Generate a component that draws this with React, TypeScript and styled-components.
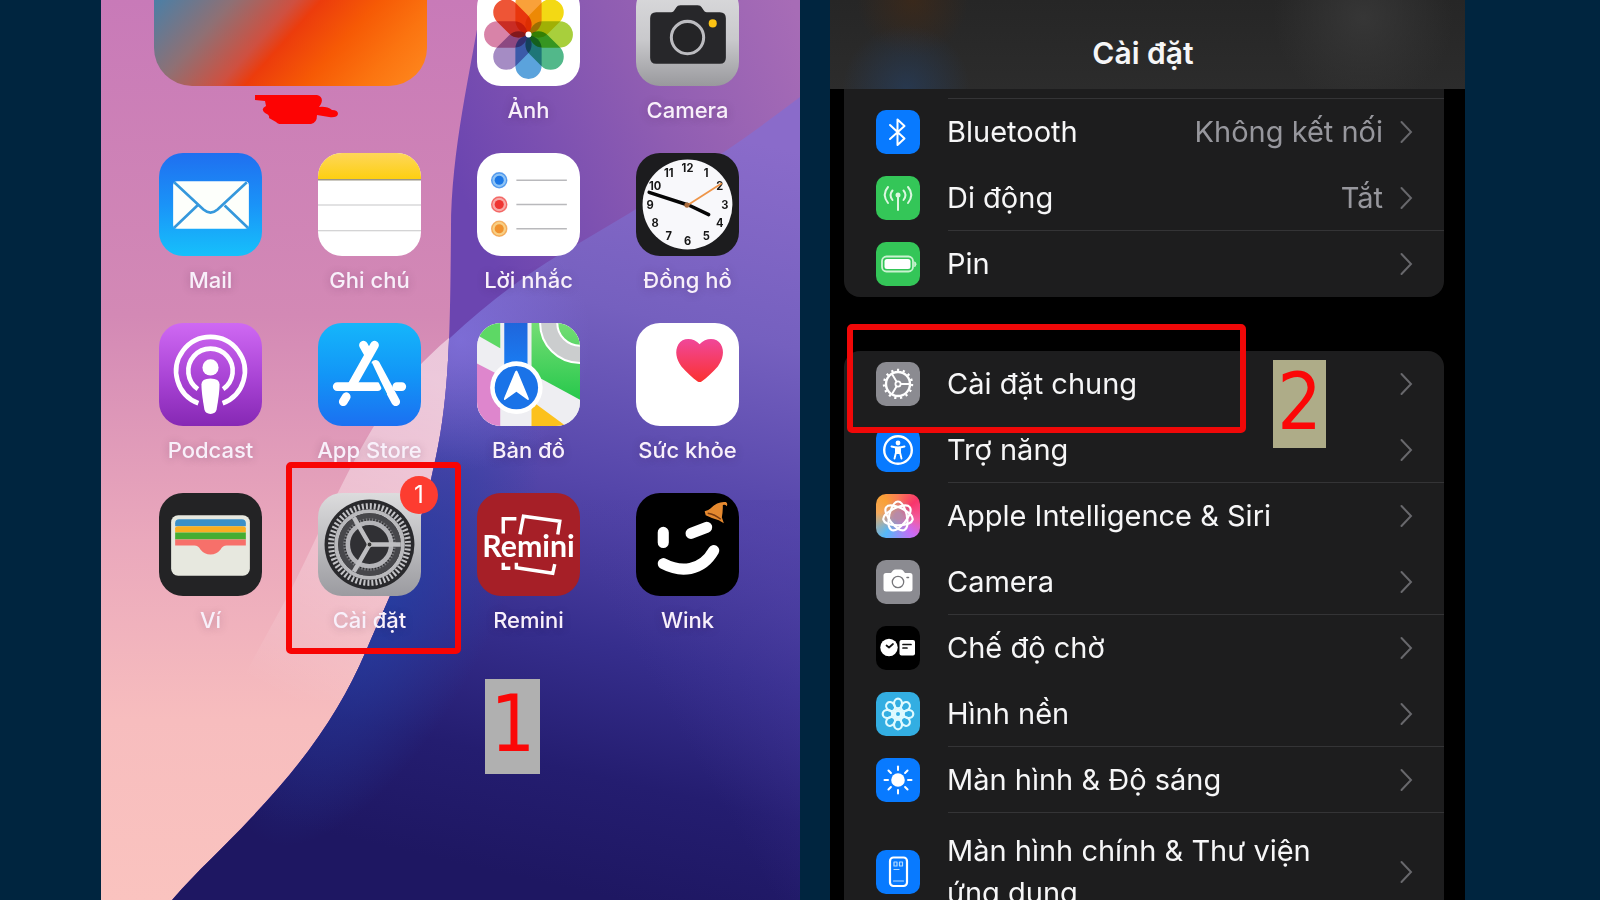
import React from "react";
import styled, { createGlobalStyle } from "styled-components";

const GlobalStyle = createGlobalStyle`
  *, *::before, *::after { box-sizing: border-box; }
  body { margin: 0; background: #00253f; font-family: Inter, "Noto Sans", sans-serif; }
  button { font: inherit; color: inherit; background: none; border: 0; padding: 0; text-align: inherit; cursor: pointer; }
  h1, ul, p { margin: 0; padding: 0; }
  ul { list-style: none; }
`;

const Page = styled.main`
  display: grid;
  grid-template-columns: 699fr 635fr;
  column-gap: 30px;
  padding: 0 135px 0 101px;
  height: 100vh;
  overflow: hidden;
`;

/* ---------- Home screen ---------- */

const HomeScreen = styled.section`
  position: relative;
  isolation: isolate;
  overflow: hidden;
  min-height: 100vh;
`;

const WallpaperArt = styled.svg`
  position: absolute;
  inset: 0;
  z-index: -1;
  width: 100%;
  height: 100%;
`;

const AppGrid = styled.ul`
  display: grid;
  grid-template-columns: repeat(4, 1fr);
  row-gap: 29px;
  margin-top: -17px;
  padding: 0 33px 0 30px;
`;

const Cell = styled.li<{ $span?: number }>`
  position: relative;
  grid-column: span ${(p) => p.$span ?? 1};
  display: flex;
  justify-content: center;
`;

const AppButton = styled.button`
  display: flex;
  flex-direction: column;
  align-items: center;
  gap: 11px;
`;

const AppIcon = styled.span<{ $bg: string }>`
  display: block;
  width: 103px;
  height: 103px;
  border-radius: 24px;
  overflow: hidden;
  background: ${(p) => p.$bg};
  svg { display: block; width: 100%; height: 100%; }
`;

const AppLabel = styled.span`
  font-size: 22px;
  line-height: 27px;
  font-weight: 500;
  color: #f8f0fa;
  white-space: nowrap;
  text-shadow: 0 1px 8px rgba(60, 20, 60, 0.25);
`;

const WidgetFace = styled.span`
  display: block;
  width: 273px;
  height: 103px;
  border-radius: 0 0 38px 38px;
  background: linear-gradient(132deg, #3d82b0 0%, #8f7074 26%, #cf5040 43%, #ec3c0c 50%, #f65a05 66%, #fb7410 82%, #ff8a20 100%);
`;

const Scribble = styled.svg`
  width: 96px;
  height: 32px;
  margin-top: -5px;
`;

const Badge = styled.span`
  position: absolute;
  top: -17px;
  right: 11px;
  width: 38px;
  height: 38px;
  border-radius: 50%;
  background: #fd3c30;
  color: #fff;
  font-size: 24px;
  line-height: 38px;
  text-align: center;
`;

const AppFrame = styled.span`
  position: absolute;
  inset: -31px -12px -20px -4px;
  border: 6px solid #f80404;
  border-radius: 5px;
  pointer-events: none;
`;

const StepTag = styled.span<{ $bg: string; $w: number; $h: number }>`
  position: absolute;
  z-index: 3;
  width: ${(p) => p.$w}px;
  height: ${(p) => p.$h}px;
  background: ${(p) => p.$bg};
  color: #fb0707;
  font-family: "DejaVu Sans Condensed", "DejaVu Sans", sans-serif;
  font-stretch: condensed;
  font-size: 78px;
  text-align: center;
`;

const StepOne = styled(StepTag)`
  top: 679px;
  left: 55%;
  line-height: 90px;
`;

const StepTwo = styled(StepTag)`
  top: 9px;
  left: 429px;
  line-height: 84px;
`;

/* ---------- Settings screen ---------- */

const SettingsScreen = styled.section`
  min-height: 100vh;
  overflow: hidden;
  background: #000;
  color: #f6f6f7;
`;

const TitleBar = styled.header`
  position: relative;
  height: 89px;
  padding-top: 34px;
  background:
    radial-gradient(circle at 12% 100%, rgba(38, 60, 90, 0.75), transparent 64px),
    radial-gradient(circle at 13% 0%, rgba(70, 42, 20, 0.6), transparent 56px),
    radial-gradient(circle at 84% 20%, rgba(58, 58, 58, 0.8), transparent 90px),
    linear-gradient(#262626, #2c2c2c);
  text-align: center;
`;

const Title = styled.h1`
  margin-right: 9px;
  font-size: 30px;
  line-height: 38px;
  font-weight: 600;
`;

const Card = styled.ul<{ $continued?: boolean }>`
  margin: ${(p) => (p.$continued ? "0 21px 54px 14px" : "0 21px 0 14px")};
  padding-top: ${(p) => (p.$continued ? "10px" : "0")};
  border-radius: ${(p) => (p.$continued ? "0 0 16px 16px" : "16px")};
  background: #1d1d1e;
`;

const Row = styled.li<{ $line?: boolean }>`
  position: relative;
  &::before {
    content: "";
    position: absolute;
    top: -1px;
    left: 104px;
    right: 0;
    height: 1px;
    background: ${(p) => (p.$line ? "#343436" : "transparent")};
  }
`;

const RowButton = styled.button`
  display: flex;
  align-items: center;
  width: 100%;
  padding: 11px 31px 11px 32px;
`;

const RowIcon = styled.span<{ $bg: string }>`
  flex: none;
  width: 44px;
  height: 44px;
  margin-right: 27px;
  border-radius: 10px;
  overflow: hidden;
  background: ${(p) => p.$bg};
  svg { display: block; width: 44px; height: 44px; }
`;

const RowText = styled.span`
  flex: 1;
  font-size: 29px;
  line-height: 42px;
`;

const WrapText = styled(RowText)`
  padding: 6px 60px 6px 0;
`;

const RowValue = styled.span`
  margin-right: 17px;
  color: #97979d;
  font-size: 29px;
  line-height: 42px;
`;

const Chevron = styled.svg`
  flex: none;
  width: 13px;
  height: 24px;
`;

const RowFrame = styled.span`
  position: absolute;
  z-index: 2;
  top: -27px;
  bottom: -16px;
  left: 3px;
  width: 399px;
  border: 6px solid #f00808;
  border-radius: 5px;
  pointer-events: none;
`;

/* ---------- App drawings (102 x 102) ---------- */

const Big = ({ children }: { children: React.ReactNode }) => (
  <svg viewBox="0 0 102 102" preserveAspectRatio="none" aria-hidden="true">{children}</svg>
);

const range = (n: number) => Array.from({ length: n }, (_, i) => i);

const PETALS = ["#f9a13a", "#f3d914", "#a8cf3c", "#52b88a", "#5ba3dc", "#a58cc4", "#d883a8", "#ee5536"];

const PhotosArt = () => (
  <Big>
    <g style={{ isolation: "isolate" }}>
      {PETALS.map((c, i) => (
        <rect key={c} x="38" y="7" width="26" height="43" rx="13" fill={c} transform={`rotate(${i * 45} 51 51)`} style={{ mixBlendMode: "multiply" }} />
      ))}
    </g>
    <circle cx="51" cy="51" r="3" fill="#fff" />
  </Big>
);

const CameraArt = () => (
  <Big>
    <path d="M20 29h15q2 0 3-2l2-3q1-2 4-2h17q3 0 4 2l2 3q1 2 3 2h13q6 0 6 6v39q0 6-6 6H20q-6 0-6-6V35q0-6 6-6z" fill="#27272a" />
    <circle cx="51" cy="54" r="16" fill="#242426" stroke="#bcbcc0" strokeWidth="3" />
    <circle cx="76" cy="40" r="4" fill="#fcc313" />
  </Big>
);

const MailArt = () => (
  <Big>
    <rect x="14" y="28" width="75" height="47" rx="4" fill="#fdfffb" />
    <path d="M15 29l29 27q7 6 14 0l29-27M15 74l23-22M88 74L65 52" fill="none" stroke="#3598dc" strokeWidth="2.6" />
  </Big>
);

const NotesArt = () => (
  <Big>
    <defs>
      <linearGradient id="notesTop" x2="0" y2="1"><stop stopColor="#fed75a" /><stop offset="1" stopColor="#fdcf10" /></linearGradient>
    </defs>
    <rect width="102" height="26" fill="url(#notesTop)" />
    <path d="M0 26.5h102" stroke="#9b9684" strokeWidth="1.4" />
    <path d="M0 51.5h102M0 77h102" stroke="#c6c6c8" strokeWidth="1.2" />
  </Big>
);

const RemindersArt = () => (
  <Big>
    {[["#1b77e6", "#8fc4f5", 27], ["#ef3532", "#f8a8a6", 51], ["#f0912e", "#f8cf85", 75]].map(([c, ring, y]) => (
      <g key={String(y)}>
        <circle cx="22" cy={y} r="7.5" fill={String(ring)} stroke={String(c)} strokeOpacity="0.65" strokeWidth="1.4" />
        <circle cx="22" cy={y} r="4.5" fill={String(c)} />
        <path d={`M39 ${y}h50`} stroke="#b9b9bc" strokeWidth="1.6" />
      </g>
    ))}
  </Big>
);

const ClockArt = () => (
  <Big>
    <circle cx="51" cy="51" r="44.5" fill="#f8f8fb" />
    <g fontFamily="Inter, sans-serif" fontSize="11" fontWeight="700" fill="#161616" textAnchor="middle">
      {range(12).map((i) => {
        const a = ((i + 1) * Math.PI) / 6;
        return <text key={i} x={51 + 37 * Math.sin(a)} y={55 - 36 * Math.cos(a)}>{i + 1}</text>;
      })}
    </g>
    <path d="M50 51L13 39M51 51l21 10" stroke="#050505" strokeWidth="3.4" strokeLinecap="round" />
    <path d="M49 53l36-23" stroke="#ee9549" strokeWidth="1.8" />
    <circle cx="50.5" cy="51.5" r="2.6" fill="#a96b3c" />
  </Big>
);

const PodcastArt = () => (
  <Big>
    <g fill="none" stroke="#fff">
      <path d="M39 79.500A34 34 0 1 1 63 79.500" strokeWidth="4.600" />
      <path d="M38.500 65.500A22 22 0 1 1 63.500 65.500" strokeWidth="4.600" />
    </g>
    <circle cx="51" cy="44" r="8" fill="#fff" />
    <path d="M42 61q0-6 9-6t9 6q0 8-3 25-1 4-6 4t-6-4q-3-17-3-25z" fill="#fff" />
  </Big>
);

const AppStoreArt = () => (
  <Big>
    <g fill="none" stroke="#fff" strokeLinecap="round" strokeWidth="8.600">
      <path d="M56 22L34 61M45 22l4 7M28 73l-3 5" />
      <path d="M57 41l20 37" />
      <path d="M19 63h40M78 63h5" />
    </g>
    <path d="M52.500 40l8 17 7 14" stroke="#0f96f5" strokeWidth="2.400" fill="none" />
  </Big>
);

const MapsArt = () => (
  <Big>
    <defs>
      <linearGradient id="mapGreen" x2="0" y2="1"><stop stopColor="#74dd74" /><stop offset="1" stopColor="#27c84c" /></linearGradient>
      <linearGradient id="mapBlue" x2="0" y2="1"><stop stopColor="#1f66dc" /><stop offset="1" stopColor="#1785fb" /></linearGradient>
    </defs>
    <rect width="102" height="102" fill="#eeeef2" />
    <path d="M0 0h23v25L0 12z" fill="#5dd865" />
    <path d="M0 40l23 12v50H0z" fill="#de86cd" />
    <path d="M54 0h48v76L54 50z" fill="url(#mapGreen)" />
    <path d="M54 77l34 25H54z" fill="#fcc11d" />
    <circle cx="102" cy="0" r="31" fill="none" stroke="#fff" strokeWidth="19" />
    <circle cx="102" cy="0" r="31" fill="none" stroke="#cbcdce" strokeWidth="15" />
    <path d="M27 0h23v60H27z" fill="url(#mapBlue)" />
    <circle cx="39" cy="64" r="26" fill="#fff" />
    <circle cx="39" cy="64" r="21.500" fill="#1a73e8" />
    <path d="M39 47q1 0 2 3l10 24q1 3-1 2L39 68 28 76q-2 1-1-2l10-24q1-3 2-3z" fill="#fff" />
  </Big>
);

const HealthArt = () => (
  <Big>
    <defs>
      <linearGradient id="heart" x2="0" y2="1"><stop stopColor="#f0479a" /><stop offset="1" stopColor="#fb3230" /></linearGradient>
    </defs>
    <path d="M63 21C57 14 46 14 42 21c-4 7-2 15 3 22 5 6 11 11 16 15q2 1 4 0c5-4 11-9 16-15 5-7 7-15 3-22-4-7-15-7-21 0z" fill="url(#heart)" />
  </Big>
);

const WalletArt = () => (
  <Big>
    <rect x="12" y="22" width="78" height="60" rx="7" fill="#e7e8df" />
    <path d="M16 33v-3q0-4 4-4h62q4 0 4 4v3z" fill="#3b90c9" />
    <path d="M16 38v-3q0-2 3-2h64q3 0 3 2v4H16z" fill="#f9ae22" />
    <path d="M16 39h70v7H16z" fill="#45ad32" />
    <path d="M16 46h70v6H67q-4 0-6 4-4 5-10 5t-10-5q-2-4-6-4H16z" fill="#f7706a" />
  </Big>
);

const SettingsArt = () => (
  <Big>
    <circle cx="51" cy="51" r="44.500" fill="#29292c" />
    <circle cx="51" cy="51" r="38" fill="none" stroke="#c3c3c6" strokeWidth="6" strokeDasharray="2 1.980" />
    <circle cx="51" cy="51" r="33" fill="none" stroke="#b9b9bc" strokeWidth="4" />
    <circle cx="51" cy="51" r="28" fill="none" stroke="#47474b" strokeWidth="6" />
    <circle cx="51" cy="51" r="24.500" fill="none" stroke="#77777b" strokeWidth="3" strokeDasharray="1.500 1.500" />
    <circle cx="51" cy="51" r="21.500" fill="#303034" stroke="#b4b4b8" strokeWidth="4.500" />
    <path d="M51 51h31M51 51L35.500 24.200M51 51L35.500 77.800" stroke="#bebec1" strokeWidth="4.400" />
    <circle cx="51" cy="51" r="2.400" fill="#333" stroke="#bbb" />
  </Big>
);

const ReminiArt = () => (
  <Big>
    <g fill="none" stroke="#fff" strokeWidth="3.400">
      <path d="M26 40V25.500h13M42.500 41l3.500-18 36 5-2 13M26 69v5.500h7M39 69v5l36 5.500 2-9" />
    </g>
    <text x="51" y="63" textAnchor="middle" fontFamily="Lato, Inter, sans-serif" fontWeight="700" fontSize="30" fill="#fff">Remini</text>
  </Big>
);

const WinkArt = () => (
  <Big>
    <g fill="none" stroke="#fff" strokeWidth="11" strokeLinecap="round">
      <path d="M27 39v10M54.500 40l15.500-6M27 70c17 9 38 8 50-13" />
    </g>
    <path d="M68 18q4-1 6-3 7-7 15-6 2 1 1 4-2-2-4-1 0 8-1 12l2 6-5-3q-7-2-13-5z" fill="#e5892f" />
    <path d="M71 20q7 1 13 6" stroke="#7c3c10" strokeWidth="1.500" fill="none" />
  </Big>
);

/* ---------- Row drawings (44 x 44) ---------- */

const Small = ({ children }: { children: React.ReactNode }) => (
  <svg viewBox="0 0 44 44" fill="none" stroke="#fff" strokeLinecap="round" strokeLinejoin="round" aria-hidden="true">{children}</svg>
);

const BluetoothArt = () => (
  <Small><path d="M14 15l14.500 13.500L21.500 35V9.500l7 6.500L14 29" strokeWidth="2" /></Small>
);

const CellularArt = () => (
  <Small>
    <g stroke="#dcf7e0" strokeWidth="2">
      <path d="M12 11q-6.500 7.500 0 16M32 11q6.500 7.500 0 16M16.500 14.500q-4 4.500 0 9.500M27.500 14.500q4 4.500 0 9.500M22 20v14" />
    </g>
    <circle cx="22" cy="19" r="2.500" fill="#dcf7e0" stroke="none" />
  </Small>
);

const BatteryArt = () => (
  <Small>
    <rect x="6" y="14.500" width="31" height="15" rx="4.500" stroke="#c9f2d0" strokeWidth="1.800" />
    <rect x="8.500" y="17" width="26" height="10" rx="2.500" fill="#fff" stroke="none" />
    <path d="M39 20q2.500 2 0 4.500z" fill="#c9f2d0" stroke="#c9f2d0" strokeWidth="1" />
  </Small>
);

const GearArt = () => (
  <Small>
    <circle cx="22" cy="22" r="12" strokeWidth="2.400" />
    <circle cx="22" cy="22" r="14" strokeWidth="2.400" strokeDasharray="2.200 3.664" strokeLinecap="butt" />
    <circle cx="22" cy="22" r="2.600" strokeWidth="1.800" />
    <path d="M25 22h9M20.500 19.500L16 12M20.500 24.500L16 32" strokeWidth="1.900" />
  </Small>
);

const AccessArt = () => (
  <Small>
    <circle cx="22" cy="22" r="13.800" strokeWidth="2.400" />
    <circle cx="22" cy="15" r="2.400" fill="#fff" stroke="none" />
    <path d="M15.500 18.500l4.500 1v5l-1.500 6M28.500 18.500l-4.500 1v5l1.500 6" strokeWidth="1.900" />
    <path d="M20 19h4v6.500h-4z" fill="#fff" strokeWidth="1" />
  </Small>
);

const SiriArt = () => (
  <Small>
    {range(7).map((i) => (
      <path key={i} d="M13.500 20Q17 7.500 22 7.500T30.500 20" transform={`rotate(${(i * 360) / 7} 22 22.500)`} strokeWidth="2.200" />
    ))}
  </Small>
);

const CameraRowArt = () => (
  <Small>
    <path d="M10 13h5l2-2.500q1-1 2.500-1h5q1.500 0 2.500 1l2 2.500h5q2.500 0 2.500 2.500V29q0 2.500-2.500 2.500H10Q7.500 31.500 7.500 29V15.500Q7.500 13 10 13z" fill="#fff" stroke="none" />
    <circle cx="22" cy="22" r="5.700" stroke="#77777b" strokeWidth="1.300" />
    <path d="M31 17.500h1.500" stroke="#77777b" strokeWidth="1.500" />
  </Small>
);

const StandbyArt = () => (
  <Small>
    <circle cx="13" cy="21.500" r="8.700" fill="#fff" stroke="none" />
    <rect x="23.500" y="14" width="15.500" height="15.500" rx="2" fill="#fff" stroke="none" />
    <path d="M10.500 19.500l2.500 2 4-3.500M27 18.500h8M27 22h4" stroke="#111" strokeWidth="1.700" />
  </Small>
);

const WallpaperRowArt = () => (
  <Small>
    <g stroke="#dffaff" strokeWidth="2.200">
      {range(8).map((i) => (
        <ellipse key={i} cx="22" cy="11.500" rx="4" ry="4.800" transform={`rotate(${i * 45} 22 22)`} />
      ))}
      <circle cx="22" cy="22" r="4.500" />
    </g>
    <circle cx="22" cy="22" r="3" stroke="#dffaff" strokeWidth="2" />
  </Small>
);

const SunArt = () => (
  <Small>
    <circle cx="22" cy="22" r="6.800" fill="#fff" stroke="none" />
    {range(8).map((i) => (
      <path key={i} d="M22 8.500v3.500" transform={`rotate(${i * 45} 22 22)`} strokeWidth="2" />
    ))}
  </Small>
);

const PhoneArt = () => (
  <Small>
    <rect x="14" y="7.500" width="17" height="28.500" rx="3.500" strokeWidth="2.200" />
    <g stroke="#b4dbff" strokeWidth="1.200">
      <path d="M18 12h3v4h-3zM23.500 12h3v4h-3zM18 19.500h5M17.500 31h10" />
    </g>
  </Small>
);

/* ---------- Data ---------- */

type App = { name: string; bg: string; art: React.ReactNode; badge?: string };

const APPS: App[] = [
  { name: "Ảnh", bg: "#fff", art: <PhotosArt /> },
  { name: "Camera", bg: "linear-gradient(#dcdcde, #c9c9cc 55%, #99999d)", art: <CameraArt /> },
  { name: "Mail", bg: "linear-gradient(#1f6ff0, #1a93f8 50%, #16c0fb)", art: <MailArt /> },
  { name: "Ghi chú", bg: "#fff", art: <NotesArt /> },
  { name: "Lời nhắc", bg: "#fff", art: <RemindersArt /> },
  { name: "Đồng hồ", bg: "#1c1c1e", art: <ClockArt /> },
  { name: "Podcast", bg: "linear-gradient(#cf69f3, #a843d4 55%, #8628b4)", art: <PodcastArt /> },
  { name: "App Store", bg: "linear-gradient(#15b6fb, #1296f7 50%, #1b70f1)", art: <AppStoreArt /> },
  { name: "Bản đồ", bg: "#eee", art: <MapsArt /> },
  { name: "Sức khỏe", bg: "#fff", art: <HealthArt /> },
  { name: "Ví", bg: "#232325", art: <WalletArt /> },
  { name: "Cài đặt", bg: "linear-gradient(#dcdcdd, #9b9ba0)", art: <SettingsArt />, badge: "1" },
  { name: "Remini", bg: "#a61f27", art: <ReminiArt /> },
  { name: "Wink", bg: "#000", art: <WinkArt /> },
];

type Setting = { name: string; bg: string; art: React.ReactNode; value?: string; line?: boolean; wrap?: boolean; marked?: boolean };

const CONNECTIONS: Setting[] = [
  { name: "Bluetooth", bg: "#087aff", art: <BluetoothArt />, value: "Không kết nối", line: true },
  { name: "Di động", bg: "#34c658", art: <CellularArt />, value: "Tắt" },
  { name: "Pin", bg: "#34c658", art: <BatteryArt />, line: true },
];

const GENERAL: Setting[] = [
  { name: "Cài đặt chung", bg: "#8b8b91", art: <GearArt />, marked: true },
  { name: "Trợ năng", bg: "#087aff", art: <AccessArt /> },
  {
    name: "Apple Intelligence & Siri",
    bg: "radial-gradient(circle at 50% 50%, #b78aa8 10%, transparent 55%), conic-gradient(#fb7d55, #f8356b 50deg, #f45ca0 100deg, #c96bf5 140deg, #55b8f8 215deg, #f4a85a 280deg, #f9a136 320deg, #fb7d55)",
    art: <SiriArt />,
    line: true,
  },
  { name: "Camera", bg: "#8b8b91", art: <CameraRowArt /> },
  { name: "Chế độ chờ", bg: "#000", art: <StandbyArt />, line: true },
  { name: "Hình nền", bg: "#33aee2", art: <WallpaperRowArt /> },
  { name: "Màn hình & Độ sáng", bg: "#087aff", art: <SunArt />, line: true },
  { name: "Màn hình chính & Thư viện ứng dụng", bg: "#087aff", art: <PhoneArt />, line: true, wrap: true },
];

const Wallpaper = () => (
  <WallpaperArt viewBox="0 0 699 900" preserveAspectRatio="none" aria-hidden="true">
    <defs>
      <linearGradient id="pink" x2="0" y2="1">
        <stop stopColor="#c87ab8" /><stop offset="0.350" stopColor="#d389b5" /><stop offset="0.600" stopColor="#eaa8bc" /><stop offset="0.800" stopColor="#f7bdbe" /><stop offset="1" stopColor="#fac3bf" />
      </linearGradient>
      <linearGradient id="violet" gradientUnits="userSpaceOnUse" x1="345" y1="160" x2="690" y2="0">
        <stop stopColor="#6b45b0" /><stop offset="0.550" stopColor="#8f5db2" /><stop offset="1" stopColor="#a76cb6" />
      </linearGradient>
      <linearGradient id="blue" gradientUnits="userSpaceOnUse" x1="600" y1="130" x2="430" y2="880">
        <stop stopColor="#8a6bca" /><stop offset="0.250" stopColor="#7560bf" /><stop offset="0.480" stopColor="#5546aa" /><stop offset="0.680" stopColor="#362e8d" /><stop offset="0.850" stopColor="#241d70" /><stop offset="1" stopColor="#1e1762" />
      </linearGradient>
      <radialGradient id="edge" gradientUnits="userSpaceOnUse" cx="0" cy="0" r="1" gradientTransform="translate(285 600) rotate(117) scale(270 110)">
        <stop stopColor="#2340a4" stopOpacity="0.800" /><stop offset="0.500" stopColor="#2340a4" stopOpacity="0.400" /><stop offset="1" stopColor="#2340a4" stopOpacity="0" />
      </radialGradient>
      <radialGradient id="glow" gradientUnits="userSpaceOnUse" cx="360" cy="340" r="130">
        <stop stopColor="#8576e2" stopOpacity="0.700" /><stop offset="1" stopColor="#8576e2" stopOpacity="0" />
      </radialGradient>
      <linearGradient id="corner" gradientUnits="userSpaceOnUse" x1="560" y1="700" x2="699" y2="620">
        <stop stopColor="#4a3da2" stopOpacity="0" /><stop offset="1" stopColor="#5142a8" stopOpacity="0.350" />
      </linearGradient>
      <linearGradient id="band" gradientUnits="userSpaceOnUse" x1="330" y1="380" x2="170" y2="690">
        <stop stopColor="#fff" stopOpacity="0.500" /><stop offset="0.500" stopColor="#fff" stopOpacity="0.300" /><stop offset="1" stopColor="#fff" stopOpacity="0" />
      </linearGradient>
      <clipPath id="wave">
        <path d="M381 0C370 70 350 150 350 230C349 330 349 400 332 470C320 530 298 575 265 651C240 710 205 760 150 818C125 845 95 872 71 900H699V0z" />
      </clipPath>
      <clipPath id="arc">
        <path d="M699 97C630 150 560 195 480 242C430 270 390 300 349 338L270 430L0 900H699z" />
      </clipPath>
    </defs>
    <rect width="699" height="900" fill="url(#pink)" />
    <path d="M360 328C320 360 300 385 278 418C245 470 215 540 190 590L130 700H400V320z" fill="url(#band)" />
    <g clipPath="url(#wave)">
      <rect width="699" height="900" fill="url(#violet)" />
      <g clipPath="url(#arc)">
        <rect width="699" height="900" fill="url(#blue)" />
        <rect width="699" height="900" fill="url(#edge)" />
        <rect width="699" height="900" fill="url(#glow)" />
        <path d="M480 500H699V900H480z" fill="url(#corner)" />
      </g>
    </g>
  </WallpaperArt>
);

const SettingRow = ({ item }: { item: Setting }) => (
  <Row $line={item.line}>
    <RowButton type="button">
      <RowIcon $bg={item.bg}>{item.art}</RowIcon>
      {item.wrap ? <WrapText>{item.name}</WrapText> : <RowText>{item.name}</RowText>}
      {item.value && <RowValue>{item.value}</RowValue>}
      <Chevron viewBox="0 0 13 24" fill="none" stroke="#68686c" strokeWidth="2" strokeLinecap="round" aria-hidden="true">
        <path d="M1.500 2L11 12L1.500 22" />
      </Chevron>
    </RowButton>
    {item.marked && (
      <>
        <RowFrame />
        <StepTwo $bg="#aeac88" $w={53} $h={88}>2</StepTwo>
      </>
    )}
  </Row>
);

export default function App() {
  return (
    <>
      <GlobalStyle />
      <Page>
        <HomeScreen aria-label="Màn hình chính">
          <Wallpaper />
          <AppGrid>
            <Cell $span={2}>
              <AppButton type="button" aria-label="Widget">
                <WidgetFace />
                <Scribble viewBox="-8 0 96 32" aria-hidden="true">
                  <path d="M5 3h62q7 2 4 9l-2 3q8-1 13 3 6 0 6 4-1 4-9 3l-12-2q0 8-6 9-12 1-22 0-9 2-13-2l-7-4q1-3-4-5-5-4 1-7l-1-5-10-1z" fill="#fd0303" />
                </Scribble>
              </AppButton>
            </Cell>
            {APPS.map((app) => (
              <Cell key={app.name}>
                <AppButton type="button">
                  <AppIcon $bg={app.bg}>{app.art}</AppIcon>
                  <AppLabel>{app.name}</AppLabel>
                </AppButton>
                {app.badge && (
                  <>
                    <Badge>{app.badge}</Badge>
                    <AppFrame />
                  </>
                )}
              </Cell>
            ))}
          </AppGrid>
          <StepOne $bg="#b0b0b0" $w={55} $h={95}>1</StepOne>
        </HomeScreen>
        <SettingsScreen aria-label="Cài đặt">
          <TitleBar><Title>Cài đặt</Title></TitleBar>
          <Card $continued>
            {CONNECTIONS.map((s) => <SettingRow key={s.name} item={s} />)}
          </Card>
          <Card>
            {GENERAL.map((s) => <SettingRow key={s.name} item={s} />)}
          </Card>
        </SettingsScreen>
      </Page>
    </>
  );
}
